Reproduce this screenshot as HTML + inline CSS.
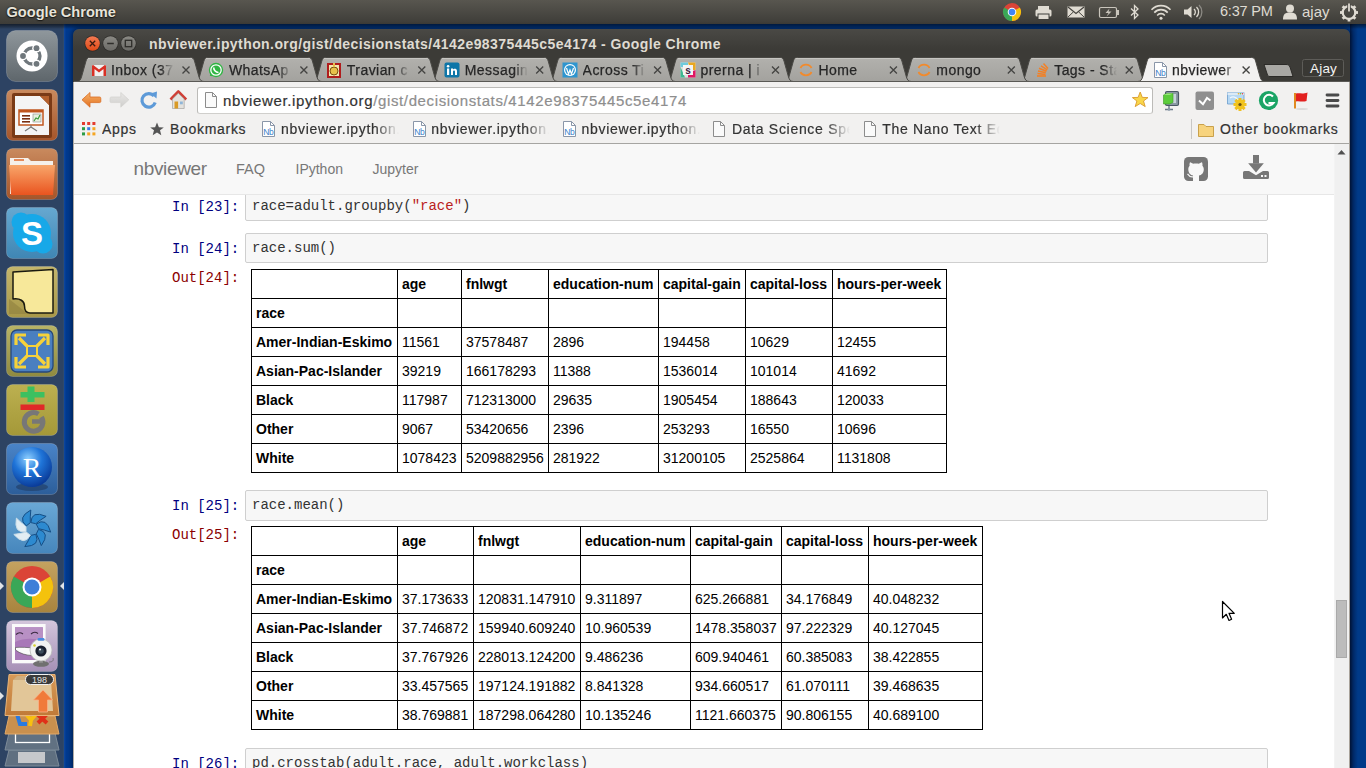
<!DOCTYPE html><html><head><meta charset="utf-8"><style>
*{margin:0;padding:0;box-sizing:border-box}
html,body{width:1366px;height:768px;overflow:hidden;background:#003a8a;font-family:"Liberation Sans",sans-serif;position:relative}
div,span,svg{position:absolute}
.t{white-space:nowrap;line-height:1}
#panel{left:0;top:0;width:1366px;height:24px;background:linear-gradient(#58564f,#3d3c38)}
#pshadow{left:0;top:24px;width:1366px;height:5px;background:linear-gradient(rgba(0,0,0,0.55),rgba(0,0,0,0.25) 60%,rgba(0,0,0,0))}
#launcher{left:0;top:24px;width:64px;height:744px;background:#2d4363}
#lnedge{left:63px;top:24px;width:1px;height:744px;background:#2f4a6c}
#bluestrip{left:64px;top:24px;width:10px;height:744px;background:linear-gradient(90deg,#1048a0,#003a90 2px,#003a8c)}
#rightblue{left:1350px;top:24px;width:16px;height:744px;background:linear-gradient(90deg,#001a48,#002c6c 3px,#003a88 8px)}
#win{left:73px;top:29px;width:1277px;height:739px;background:linear-gradient(#4a4945,#3c3b37 20px);border-radius:6px 6px 0 0;box-shadow:0 0 5px 1px rgba(0,10,30,0.6)}
#toolbar{left:74px;top:82px;width:1276px;height:61px;background:#f2f1f0}
#tbline{left:74px;top:81px;width:1276px;height:1px;background:#5a5955}
#bmline{left:74px;top:143px;width:1276px;height:1px;background:#a6a5a2}
#omni{left:197px;top:87px;width:956px;height:27px;background:#fff;border:1px solid #bcbbb8;border-bottom-color:#d0cfcc;border-radius:3px}
#content{left:74px;top:144px;width:1276px;height:624px;background:#fff}
#navbar{left:74px;top:144px;width:1260px;height:51px;background:#f8f8f8;border-bottom:1px solid #e7e7e7}
#scroll{left:1334px;top:144px;width:15px;height:624px;background:#f0f0f0;border-left:1px solid #f3f3f3}
#wedgeL{left:73px;top:82px;width:1px;height:686px;background:#b0aba4}
#wedgeR{left:1349px;top:82px;width:1px;height:686px;background:#a8a29a}
.cell{left:245px;width:1023px;height:30px;background:#f7f7f7;border:1px solid #cfcfcf;border-radius:2px}
.code{font-family:"Liberation Mono",monospace;font-size:14px;color:#333;left:252px}
.prompt{font-family:"Liberation Mono",monospace;font-size:14px;color:#000080;left:172px}
.out{color:#8b0000}
.str{color:#ba2121}
table.df{position:absolute;left:251px;border-collapse:collapse;font-size:14px;color:#000;font-family:"Liberation Sans",sans-serif}
table.df td,table.df th{border:1px solid #000;padding:4px;height:29px;line-height:20px;text-align:left;white-space:nowrap;font-weight:normal}
table.df th{font-weight:bold}
.tabtxt{-webkit-text-stroke:0.25px #262626;font-size:14px;color:#262626;letter-spacing:0.45px;overflow:hidden;height:18px;line-height:18px}
.bm{-webkit-text-stroke:0.2px #333;font-size:14px;color:#333;letter-spacing:0.7px;line-height:18px;height:18px;overflow:hidden;margin-top:-0.6px}
.ticon{width:16px;height:16px}
.launch{left:6px;width:52px;height:52px;border-radius:7px}
</style></head><body>
<div id="panel"></div>
<span class="t" style="left:6.5px;top:5px;font-size:14.6px;font-weight:bold;color:#e8e4da;text-shadow:0 0 2px #1a1a18,0 1px 1px #1a1a18">Google Chrome</span>
<span class="t" style="left:1220px;top:4px;font-size:14.5px;color:#dfdbd2;letter-spacing:-0.2px">6:37 PM</span>
<span class="t" style="left:1302px;top:4px;font-size:15px;color:#dfdbd2">ajay</span>
<svg style="left:990px;top:0px" width="376" height="24" viewBox="990 0 376 24"><circle cx="1012" cy="12" r="9" fill="#db4437"/><path d="M1012 12 L1019.8 7.5 A9 9 0 0 1 1012 21 Z" fill="#f4c20d"/><path d="M1012 12 L1012 21 A9 9 0 0 1 1004.2 7.5 Z" fill="#3aa757"/><circle cx="1012" cy="12" r="4.3" fill="#fff"/><circle cx="1012" cy="12" r="3.3" fill="#4285f4"/><rect x="1038" y="6" width="11" height="4" fill="#dfdbd2"/><rect x="1035.5" y="9.5" width="16" height="7" rx="1.5" fill="#dfdbd2"/><rect x="1038" y="14" width="11" height="5.5" fill="#dfdbd2" stroke="#3f3e3a" stroke-width="1"/><rect x="1067.5" y="6.5" width="17" height="11" fill="#dfdbd2"/><path d="M1068 7 L1076 13.5 L1084 7" fill="none" stroke="#45443f" stroke-width="1.2"/><path d="M1068 17 L1073.5 11.8 M1084 17 L1078.5 11.8" stroke="#45443f" stroke-width="1"/><rect x="1099.5" y="7.5" width="17" height="10" rx="1.5" fill="none" stroke="#c9c5bc" stroke-width="1.2"/><rect x="1117" y="10" width="2" height="5" fill="#c9c5bc"/><path d="M1109.5 8.5 L1105.5 13 L1108.5 13 L1106.5 16.5 L1111.5 11.5 L1108.5 11.5 Z" fill="#c9c5bc"/><path d="M1131 8.5 L1138 15 L1134.5 18.5 V5.5 L1138 9 L1131 15.5" fill="none" stroke="#dfdbd2" stroke-width="1.3"/><path d="M1151.5 9.8 A13 13 0 0 1 1170.5 9.8" fill="none" stroke="#dfdbd2" stroke-width="1.6"/><path d="M1154.3 12.6 A9 9 0 0 1 1167.7 12.6" fill="none" stroke="#dfdbd2" stroke-width="1.6"/><path d="M1157.2 15.4 A5 5 0 0 1 1164.8 15.4" fill="none" stroke="#dfdbd2" stroke-width="1.6"/><circle cx="1161" cy="18.3" r="1.5" fill="#dfdbd2"/><path d="M1184 9.5 H1187.5 L1191.5 6 V18 L1187.5 14.5 H1184 Z" fill="#dfdbd2"/><path d="M1194 9 A4 4 0 0 1 1194 15 M1196.5 7 A7 7 0 0 1 1196.5 17" fill="none" stroke="#dfdbd2" stroke-width="1.3"/><path d="M1199 5 A10 10 0 0 1 1199 19" fill="none" stroke="#8c8a84" stroke-width="1.3"/><circle cx="1290" cy="8.5" r="4" fill="#dfdbd2"/><path d="M1283 19.5 C1283 13.5 1285.5 12.5 1290 12.5 C1294.5 12.5 1297 13.5 1297 19.5 Z" fill="#dfdbd2"/><circle cx="1349" cy="12.5" r="6.3" fill="none" stroke="#dfdbd2" stroke-width="2.2"/><rect x="1347.6" y="3.5" width="2.8" height="3.5" fill="#dfdbd2" transform="rotate(45 1349 12.5)"/><rect x="1347.6" y="3.5" width="2.8" height="3.5" fill="#dfdbd2" transform="rotate(90 1349 12.5)"/><rect x="1347.6" y="3.5" width="2.8" height="3.5" fill="#dfdbd2" transform="rotate(135 1349 12.5)"/><rect x="1347.6" y="3.5" width="2.8" height="3.5" fill="#dfdbd2" transform="rotate(180 1349 12.5)"/><rect x="1347.6" y="3.5" width="2.8" height="3.5" fill="#dfdbd2" transform="rotate(225 1349 12.5)"/><rect x="1347.6" y="3.5" width="2.8" height="3.5" fill="#dfdbd2" transform="rotate(270 1349 12.5)"/><rect x="1347.6" y="3.5" width="2.8" height="3.5" fill="#dfdbd2" transform="rotate(315 1349 12.5)"/><path d="M1349 4 V12" stroke="#45443f" stroke-width="3.4"/><path d="M1349 3.5 V11.5" stroke="#dfdbd2" stroke-width="1.8"/></svg>
<div id="launcher"></div><div id="lnedge"></div><div id="bluestrip"></div><div id="rightblue"></div>
<svg style="left:0;top:24px" width="64" height="744" viewBox="0 24 64 744"><g transform="translate(6 30)"><defs><linearGradient id="tl30" x1="0" y1="0" x2="0" y2="1"><stop offset="0" stop-color="#8f979c"/><stop offset="1" stop-color="#5e666b"/></linearGradient></defs><rect x="0.5" y="0.5" width="51" height="51" rx="9" fill="url(#tl30)" stroke="rgba(255,255,255,0.18)" stroke-width="1"/><circle cx="26" cy="26" r="15.5" fill="#fff"/><circle cx="26" cy="26" r="8" fill="none" stroke="#6f777c" stroke-width="3.3"/><circle cx="17" cy="26" r="4.3" fill="#fff"/><circle cx="30.5" cy="18.2" r="4.3" fill="#fff"/><circle cx="30.5" cy="33.8" r="4.3" fill="#fff"/><circle cx="17" cy="26" r="2.9" fill="#6f777c"/><circle cx="30.5" cy="18.2" r="2.9" fill="#6f777c"/><circle cx="30.5" cy="33.8" r="2.9" fill="#6f777c"/></g><g transform="translate(6 89)"><defs><linearGradient id="tl89" x1="0" y1="0" x2="0" y2="1"><stop offset="0" stop-color="#c98a5e"/><stop offset="1" stop-color="#a5552a"/></linearGradient></defs><rect x="0.5" y="0.5" width="51" height="51" rx="6" fill="url(#tl89)" stroke="rgba(255,255,255,0.18)" stroke-width="1"/><rect x="6" y="4" width="40" height="45" rx="2" fill="#7a3a16"/><path d="M9 7 H34 L43 16 V46 H9 Z" fill="#f4f4f4"/><path d="M34 7 L43 7 L43 16 Z" fill="#b5602c"/><rect x="13" y="21" width="24" height="15" fill="#fff" stroke="#c0561e" stroke-width="1.5"/><rect x="13" y="21" width="24" height="2.5" fill="#c0561e"/><rect x="16" y="26" width="8" height="1.6" fill="#7a2f10"/><rect x="16" y="29" width="8" height="1.6" fill="#7a2f10"/><rect x="16" y="32" width="8" height="1.6" fill="#7a2f10"/><rect x="27" y="25" width="8" height="8" fill="#e6f0e0" stroke="#888" stroke-width="0.6"/><path d="M28 32 L30 29 L32 30 L34 26" stroke="#3a9a3a" stroke-width="1.2" fill="none"/><path d="M25 36 V38 L19 42 M25 38 L31 42" stroke="#777" stroke-width="1.2" fill="none"/></g><g transform="translate(6 148)"><defs><linearGradient id="tl148" x1="0" y1="0" x2="0" y2="1"><stop offset="0" stop-color="#c98a5e"/><stop offset="1" stop-color="#a5552a"/></linearGradient></defs><rect x="0.5" y="0.5" width="51" height="51" rx="6" fill="url(#tl148)" stroke="rgba(255,255,255,0.18)" stroke-width="1"/><path d="M4 10 H22 L25 13 H47 V46 H4 Z" fill="#f5f0ea"/><rect x="8" y="11" width="10" height="2" fill="#e58a5a"/><defs><linearGradient id="fo" x1="0" y1="0" x2="0" y2="1"><stop offset="0" stop-color="#f8a66a"/><stop offset="1" stop-color="#e9541f"/></linearGradient></defs><path d="M3 17 H49 L47 47 H5 Z" fill="url(#fo)"/></g><g transform="translate(6 207)"><defs><linearGradient id="tl207" x1="0" y1="0" x2="0" y2="1"><stop offset="0" stop-color="#66a8d0"/><stop offset="1" stop-color="#3f86b4"/></linearGradient></defs><rect x="0.5" y="0.5" width="51" height="51" rx="6" fill="url(#tl207)" stroke="rgba(255,255,255,0.18)" stroke-width="1"/><circle cx="26" cy="26" r="19" fill="#17a8e8"/><circle cx="15" cy="15" r="9.5" fill="#17a8e8"/><circle cx="37" cy="37" r="9.5" fill="#17a8e8"/><text x="26" y="38" font-family="Liberation Sans" font-weight="bold" font-size="33" text-anchor="middle" fill="#fff">S</text></g><g transform="translate(6 266)"><defs><linearGradient id="tl266" x1="0" y1="0" x2="0" y2="1"><stop offset="0" stop-color="#c4b66c"/><stop offset="1" stop-color="#a89848"/></linearGradient></defs><rect x="0.5" y="0.5" width="51" height="51" rx="6" fill="url(#tl266)" stroke="rgba(255,255,255,0.18)" stroke-width="1"/><path d="M3 33 L3 48 L22 48 Z" fill="#8f8040" opacity="0.6"/><path d="M7 6 L47 3.5 L47 47 L24 47 C20 47 18.5 44 18.5 40 C18.5 35 14 32 7 33 Z" fill="#f7e89a" stroke="#1a1a10" stroke-width="1.5" stroke-linejoin="round"/></g><g transform="translate(6 325)"><defs><linearGradient id="tl325" x1="0" y1="0" x2="0" y2="1"><stop offset="0" stop-color="#b8b466"/><stop offset="1" stop-color="#8f8a40"/></linearGradient></defs><rect x="0.5" y="0.5" width="51" height="51" rx="6" fill="url(#tl325)" stroke="rgba(255,255,255,0.18)" stroke-width="1"/><rect x="5" y="5" width="42" height="42" rx="6" fill="#4a7fc0" stroke="#26477a" stroke-width="1.3"/><g fill="none" stroke="#f6d23a" stroke-width="3.2" stroke-linejoin="round"><path d="M10 20 V10 H20 M13 13 L22 22"/><path d="M42 20 V10 H32 M39 13 L30 22"/><path d="M10 32 V42 H20 M13 39 L22 30"/><path d="M42 32 V42 H32 M39 39 L30 30"/></g><rect x="21" y="21" width="10" height="10" fill="none" stroke="#f6d23a" stroke-width="2"/></g><g transform="translate(6 384)"><defs><linearGradient id="tl384" x1="0" y1="0" x2="0" y2="1"><stop offset="0" stop-color="#bcb050"/><stop offset="1" stop-color="#a49838"/></linearGradient></defs><rect x="0.5" y="0.5" width="51" height="51" rx="6" fill="url(#tl384)" stroke="rgba(255,255,255,0.18)" stroke-width="1"/><rect x="21.5" y="2.5" width="7" height="15.5" fill="#3cc060"/><rect x="14.5" y="8" width="24" height="5.5" fill="#3cc060"/><rect x="14.5" y="20.5" width="24" height="5.5" fill="#e02828"/><path d="M35.5 33 A9.3 9.3 0 1 1 32.5 30" fill="none" stroke="#777" stroke-width="5"/><path d="M26 37.5 H35" stroke="#777" stroke-width="4.5"/></g><g transform="translate(6 443)"><defs><linearGradient id="tl443" x1="0" y1="0" x2="0" y2="1"><stop offset="0" stop-color="#4a84c8"/><stop offset="1" stop-color="#2c5e9a"/></linearGradient></defs><rect x="0.5" y="0.5" width="51" height="51" rx="6" fill="url(#tl443)" stroke="rgba(255,255,255,0.18)" stroke-width="1"/><ellipse cx="26" cy="44" rx="16" ry="4" fill="#203a60" opacity="0.6"/><defs><radialGradient id="rg" cx="0.4" cy="0.3" r="0.7"><stop offset="0" stop-color="#8fd0ff"/><stop offset="0.5" stop-color="#1f74d8"/><stop offset="1" stop-color="#0a3c9a"/></radialGradient></defs><circle cx="26" cy="24" r="20" fill="url(#rg)"/><text x="26" y="34" font-family="Liberation Serif" font-size="28" text-anchor="middle" fill="#fff">R</text></g><g transform="translate(6 502)"><defs><linearGradient id="tl502" x1="0" y1="0" x2="0" y2="1"><stop offset="0" stop-color="#6aa8d6"/><stop offset="1" stop-color="#4686bc"/></linearGradient></defs><rect x="0.5" y="0.5" width="51" height="51" rx="6" fill="url(#tl502)" stroke="rgba(255,255,255,0.18)" stroke-width="1"/><path d="M24.9 20.6 Q25.3 8.0 40.1 14.3 Q34.0 18.1 29.8 21.7 Z" fill="#2d8ad0" stroke="#164f86" stroke-width="1"/><path d="M30.3 22.1 Q40.4 14.6 44.7 30.1 Q38.0 27.7 32.5 26.7 Z" fill="#2d8ad0" stroke="#164f86" stroke-width="1"/><path d="M32.5 27.3 Q44.7 30.6 35.3 43.6 Q32.9 36.8 30.3 31.9 Z" fill="#2d8ad0" stroke="#164f86" stroke-width="1"/><path d="M29.8 32.3 Q34.9 43.8 18.8 44.6 Q22.7 38.5 24.8 33.4 Z" fill="#2d8ad0" stroke="#164f86" stroke-width="1"/><path d="M24.3 33.3 Q18.4 44.4 7.8 32.4 Q14.9 31.6 20.3 30.1 Z" fill="#e2edf3" stroke="#c8dce8" stroke-width="1"/><path d="M20.0 29.5 Q7.6 31.9 10.4 16.1 Q15.5 21.2 20.0 24.5 Z" fill="#e2edf3" stroke="#c8dce8" stroke-width="1"/><path d="M20.3 23.9 Q10.7 15.7 24.8 8.0 Q24.0 15.2 24.3 20.7 Z" fill="#2d8ad0" stroke="#164f86" stroke-width="1"/></g><g transform="translate(6 561)"><defs><linearGradient id="tl561" x1="0" y1="0" x2="0" y2="1"><stop offset="0" stop-color="#c4a260"/><stop offset="1" stop-color="#a8843e"/></linearGradient></defs><rect x="0.5" y="0.5" width="51" height="51" rx="6" fill="url(#tl561)" stroke="rgba(255,255,255,0.18)" stroke-width="1"/><circle cx="26" cy="26" r="21" fill="#db4437"/><path d="M26 26 L44.19 15.5 A21 21 0 0 1 26 47 Z" fill="#f4c20d"/><path d="M26 26 L26 47 A21 21 0 0 1 7.81 15.5 Z" fill="#3aa757"/><circle cx="26" cy="26" r="9.5" fill="#fff"/><circle cx="26" cy="26" r="7.5" fill="#3f7fd8"/></g><path d="M0 582 L4 586 L0 590 Z" fill="#dfe3e8"/><path d="M64 582 L60 586 L64 590 Z" fill="#dfe3e8"/><g transform="translate(6 620)"><defs><linearGradient id="tl620" x1="0" y1="0" x2="0" y2="1"><stop offset="0" stop-color="#d4c6dc"/><stop offset="1" stop-color="#a690b6"/></linearGradient></defs><rect x="0.5" y="0.5" width="51" height="51" rx="6" fill="url(#tl620)" stroke="rgba(255,255,255,0.18)" stroke-width="1"/><rect x="6" y="4" width="33.6" height="39.3" fill="#fafafa"/><rect x="9" y="7.3" width="27.8" height="32.7" fill="#a878b8"/><path d="M9 22 C18 18 28 18 36.8 21 V7.3 H9 Z" fill="#b890c4"/><path d="M10 14.5 C12 12.5 15 12.5 17 14 M25 14 C27 12 30 12 32 13.5" stroke="#3a2a40" stroke-width="1.1" fill="none"/><path d="M9.5 27.5 C15 27 22 27.5 28 28 L27 35.5 C20 35.5 14 33.5 9.5 30 Z" fill="#fbfbfb" stroke="#444" stroke-width="0.6"/><ellipse cx="35" cy="43.8" rx="8" ry="3" fill="#707070"/><rect x="33" y="38" width="4" height="5" fill="#888"/><circle cx="35" cy="30" r="11" fill="#f2f2f2" stroke="#b8b8b8" stroke-width="0.8"/><circle cx="35" cy="31" r="5.6" fill="#1a2030"/><circle cx="35" cy="31" r="2.8" fill="#3a4a5a"/><circle cx="34" cy="29.5" r="1" fill="#fff"/><rect x="31.5" y="18" width="7" height="2.8" rx="1.4" fill="#4a8ae0"/><circle cx="28.5" cy="25.5" r="1.3" fill="#d8d030"/><path d="M43 42 C46 42 48 41 47 38" stroke="#666" stroke-width="0.7" fill="none"/></g><defs><linearGradient id="up" x1="0" y1="0" x2="0" y2="1"><stop offset="0" stop-color="#d89a58"/><stop offset="1" stop-color="#c07a38"/></linearGradient></defs><path d="M9 750 H55 L59 766 H5 Z" fill="#5f6f80" stroke="#7d8b98" stroke-width="1"/><rect x="18" y="752" width="27" height="11" fill="#d8d8d8" opacity="0.85"/><path d="M9 733 H55 L59 750 H5 Z" fill="#617182" stroke="#7d8b98" stroke-width="1"/><rect x="15.5" y="732.5" width="34" height="10" fill="none" stroke="#fff" stroke-width="1.3"/><path d="M9 716 H55 L59 734 H5 Z" fill="#c9904e" stroke="#e0a868" stroke-width="1"/><path d="M17 714 L20 724 H27" stroke="#2a7ae0" stroke-width="4" fill="none"/><path d="M26 714 L31 720 L36 714 M31 720 L30 726" stroke="#f8c010" stroke-width="4" fill="none"/><path d="M37 714 L47 723 M47 714 L38 723" stroke="#e03018" stroke-width="4" fill="none"/><path d="M9 674.5 H55 L59 715.5 H5 Z" fill="url(#up)" stroke="#e8b478" stroke-width="1"/><path d="M13 680 H51 L53 711 H11 Z" fill="#e2c698"/><path d="M13 680 L17 676 H47 L51 680 Z" fill="#d0ae7e"/><rect x="30" y="680" width="3" height="4" fill="#f0e0c0"/><path d="M43 690 L52.5 700 H47.5 V712 H38.5 V700 H33.5 Z" fill="#f07a3a" stroke="#f8b088" stroke-width="0.8"/><rect x="25.5" y="674.5" width="28" height="10" rx="5" fill="#3a3a3a" stroke="#f0f0f0" stroke-width="1"/><text x="39.5" y="683" font-family="Liberation Sans" font-size="9" text-anchor="middle" fill="#e6e6e6">198</text><path d="M0 692 L4 696 L0 700 Z" fill="#dfe3e8"/></svg>
<div id="pshadow"></div>
<div id="win"></div>
<svg style="left:78px;top:34px" width="64" height="20" viewBox="78 34 64 20"><defs><linearGradient id="cg" x1="0" y1="0" x2="0" y2="1"><stop offset="0" stop-color="#f47a52"/><stop offset="1" stop-color="#df4a17"/></linearGradient><linearGradient id="gg" x1="0" y1="0" x2="0" y2="1"><stop offset="0" stop-color="#8a8984"/><stop offset="1" stop-color="#6c6b67"/></linearGradient></defs><circle cx="92.5" cy="43.5" r="8" fill="#2a2a28"/><circle cx="92.5" cy="43.5" r="7.3" fill="url(#cg)"/><path d="M89.8 40.8 L95.2 46.2 M95.2 40.8 L89.8 46.2" stroke="#3a1a10" stroke-width="1.3"/><circle cx="110.5" cy="43.5" r="8" fill="#2e2d2a"/><circle cx="110.5" cy="43.5" r="7.3" fill="url(#gg)"/><path d="M107.2 43.5 H113.8" stroke="#2f2e2b" stroke-width="1.5"/><circle cx="128.5" cy="43.5" r="8" fill="#2e2d2a"/><circle cx="128.5" cy="43.5" r="7.3" fill="url(#gg)"/><rect x="125.3" y="40.3" width="6.4" height="6.4" fill="none" stroke="#2f2e2b" stroke-width="1.3"/></svg>
<svg style="left:73px;top:56px" width="1277" height="26" viewBox="73 56 1277 26"><defs><linearGradient id="tg" x1="0" y1="0" x2="0" y2="1"><stop offset="0" stop-color="#b2b1ad"/><stop offset="1" stop-color="#a3a29e"/></linearGradient></defs><path d="M1019.7 81.5 C1022.7 81.5 1023.7 80 1024.7 77 L1029.2 61 C1029.9 58.5 1031.2 57.5 1033.2 57.5 L1133.7 57.5 C1135.7 57.5 1137.0 58.5 1137.7 61 L1142.2 77 C1143.2 80 1144.2 81.5 1147.2 81.5 Z" fill="url(#tg)" stroke="#4a4945" stroke-width="1"/><path d="M1031.2 58.5 L1135.2 58.5" stroke="#c6c5c1" stroke-width="1"/><path d="M901.8 81.5 C904.8 81.5 905.8 80 906.8 77 L911.3 61 C912.0 58.5 913.3 57.5 915.3 57.5 L1015.8 57.5 C1017.8 57.5 1019.1 58.5 1019.8 61 L1024.3 77 C1025.3 80 1026.3 81.5 1029.3 81.5 Z" fill="url(#tg)" stroke="#4a4945" stroke-width="1"/><path d="M913.3 58.5 L1017.3 58.5" stroke="#c6c5c1" stroke-width="1"/><path d="M783.9 81.5 C786.9 81.5 787.9 80 788.9 77 L793.4 61 C794.1 58.5 795.4 57.5 797.4 57.5 L897.9 57.5 C899.9 57.5 901.2 58.5 901.9 61 L906.4 77 C907.4 80 908.4 81.5 911.4 81.5 Z" fill="url(#tg)" stroke="#4a4945" stroke-width="1"/><path d="M795.4 58.5 L899.4 58.5" stroke="#c6c5c1" stroke-width="1"/><path d="M666.0 81.5 C669.0 81.5 670.0 80 671.0 77 L675.5 61 C676.2 58.5 677.5 57.5 679.5 57.5 L780.0 57.5 C782.0 57.5 783.3 58.5 784.0 61 L788.5 77 C789.5 80 790.5 81.5 793.5 81.5 Z" fill="url(#tg)" stroke="#4a4945" stroke-width="1"/><path d="M677.5 58.5 L781.5 58.5" stroke="#c6c5c1" stroke-width="1"/><path d="M548.1 81.5 C551.1 81.5 552.1 80 553.1 77 L557.6 61 C558.3 58.5 559.6 57.5 561.6 57.5 L662.1 57.5 C664.1 57.5 665.4 58.5 666.1 61 L670.6 77 C671.6 80 672.6 81.5 675.6 81.5 Z" fill="url(#tg)" stroke="#4a4945" stroke-width="1"/><path d="M559.6 58.5 L663.6 58.5" stroke="#c6c5c1" stroke-width="1"/><path d="M430.2 81.5 C433.2 81.5 434.2 80 435.2 77 L439.7 61 C440.4 58.5 441.7 57.5 443.7 57.5 L544.2 57.5 C546.2 57.5 547.5 58.5 548.2 61 L552.7 77 C553.7 80 554.7 81.5 557.7 81.5 Z" fill="url(#tg)" stroke="#4a4945" stroke-width="1"/><path d="M441.7 58.5 L545.7 58.5" stroke="#c6c5c1" stroke-width="1"/><path d="M312.3 81.5 C315.3 81.5 316.3 80 317.3 77 L321.8 61 C322.5 58.5 323.8 57.5 325.8 57.5 L426.3 57.5 C428.3 57.5 429.6 58.5 430.3 61 L434.8 77 C435.8 80 436.8 81.5 439.8 81.5 Z" fill="url(#tg)" stroke="#4a4945" stroke-width="1"/><path d="M323.8 58.5 L427.8 58.5" stroke="#c6c5c1" stroke-width="1"/><path d="M194.4 81.5 C197.4 81.5 198.4 80 199.4 77 L203.9 61 C204.6 58.5 205.9 57.5 207.9 57.5 L308.4 57.5 C310.4 57.5 311.7 58.5 312.4 61 L316.9 77 C317.9 80 318.9 81.5 321.9 81.5 Z" fill="url(#tg)" stroke="#4a4945" stroke-width="1"/><path d="M205.9 58.5 L309.9 58.5" stroke="#c6c5c1" stroke-width="1"/><path d="M76.5 81.5 C79.5 81.5 80.5 80 81.5 77 L86.0 61 C86.7 58.5 88.0 57.5 90.0 57.5 L190.5 57.5 C192.5 57.5 193.8 58.5 194.5 61 L199.0 77 C200.0 80 201.0 81.5 204.0 81.5 Z" fill="url(#tg)" stroke="#4a4945" stroke-width="1"/><path d="M88.0 58.5 L192.0 58.5" stroke="#c6c5c1" stroke-width="1"/><path d="M1137.6 81.5 C1140.6 81.5 1141.6 80 1142.6 77 L1147.1 61 C1147.8 58.5 1149.1 57.5 1151.1 57.5 L1251.6 57.5 C1253.6 57.5 1254.9 58.5 1255.6 61 L1260.1 77 C1261.1 80 1262.1 81.5 1265.1 81.5 Z" fill="#f2f1f0" stroke="#4a4945" stroke-width="1"/><path d="M182.5 66.5 L189.5 73.5 M189.5 66.5 L182.5 73.5" stroke="#454543" stroke-width="1.35"/><path d="M300.4 66.5 L307.4 73.5 M307.4 66.5 L300.4 73.5" stroke="#454543" stroke-width="1.35"/><path d="M418.3 66.5 L425.3 73.5 M425.3 66.5 L418.3 73.5" stroke="#454543" stroke-width="1.35"/><path d="M536.2 66.5 L543.2 73.5 M543.2 66.5 L536.2 73.5" stroke="#454543" stroke-width="1.35"/><path d="M654.1 66.5 L661.1 73.5 M661.1 66.5 L654.1 73.5" stroke="#454543" stroke-width="1.35"/><path d="M772.0 66.5 L779.0 73.5 M779.0 66.5 L772.0 73.5" stroke="#454543" stroke-width="1.35"/><path d="M889.9 66.5 L896.9 73.5 M896.9 66.5 L889.9 73.5" stroke="#454543" stroke-width="1.35"/><path d="M1007.8 66.5 L1014.8 73.5 M1014.8 66.5 L1007.8 73.5" stroke="#454543" stroke-width="1.35"/><path d="M1125.7 66.5 L1132.7 73.5 M1132.7 66.5 L1125.7 73.5" stroke="#454543" stroke-width="1.35"/><path d="M1242.6 66.5 L1249.6 73.5 M1249.6 66.5 L1242.6 73.5" stroke="#454543" stroke-width="1.35"/><path d="M1264 64.5 L1286 64.5 C1288 64.5 1289 65 1290 67 L1293 76.5 L1270 76.5 C1268.5 76.5 1268 76 1267.5 75 Z" fill="#a9a8a4" stroke="#2c2b28" stroke-width="1"/><rect x="1302.5" y="59.5" width="41" height="17" rx="2" fill="#393834" stroke="#5d5c58" stroke-width="1"/></svg>
<span class="t" style="left:1310px;top:62px;font-size:13.5px;color:#f4f4f2;letter-spacing:0.2px">Ajay</span>
<span class="t tabtxt" style="left:111.0px;top:61px;width:63px;-webkit-mask-image:linear-gradient(90deg,#000 78%,transparent 100%)">Inbox (37</span>
<svg style="left:91px;top:62px" width="16" height="16" viewBox="0 0 16 16"><rect x="1" y="3" width="14" height="11" fill="#f1f1f1"/><path d="M1 3.5 V14 H3.5 V7 L8 10.5 L12.5 7 V14 H15 V3.5 L13.8 3 L8 7.5 L2.2 3 Z" fill="#d93025"/></svg>
<span class="t tabtxt" style="left:228.9px;top:61px;width:63px;-webkit-mask-image:linear-gradient(90deg,#000 78%,transparent 100%)">WhatsAp</span>
<svg style="left:208px;top:62px" width="16" height="16" viewBox="0 0 16 16"><circle cx="8" cy="8" r="7.2" fill="#2fb542"/><path d="M3 14 L4 10.5" stroke="#2fb542" stroke-width="2.5"/><circle cx="8" cy="8" r="5.2" fill="none" stroke="#fff" stroke-width="1.3"/><path d="M5.8 5.5 C5.5 7.5 7.5 10.5 10.5 10.5" stroke="#fff" stroke-width="1.6" fill="none"/></svg>
<span class="t tabtxt" style="left:346.8px;top:61px;width:63px;-webkit-mask-image:linear-gradient(90deg,#000 78%,transparent 100%)">Travian c</span>
<svg style="left:326px;top:62px" width="16" height="16" viewBox="0 0 16 16"><rect x="1" y="1" width="14" height="15" fill="#b01c1c"/><rect x="3" y="3" width="10" height="11" fill="#f3e6b0"/><circle cx="8" cy="9" r="4" fill="#e8c04a" stroke="#7a5010" stroke-width="1"/><rect x="7" y="1" width="2" height="4" fill="#e8c04a"/></svg>
<span class="t tabtxt" style="left:464.7px;top:61px;width:63px;-webkit-mask-image:linear-gradient(90deg,#000 78%,transparent 100%)">Messagin</span>
<svg style="left:444px;top:62px" width="16" height="16" viewBox="0 0 16 16"><rect x="0.5" y="0.5" width="15" height="15" rx="2" fill="#0e76a8"/><rect x="3" y="6.5" width="2.2" height="6.5" fill="#fff"/><circle cx="4.1" cy="4.2" r="1.3" fill="#fff"/><path d="M7 13 V6.5 H9 V7.5 C9.5 6.5 13 6 13 9 V13 H11 V9.5 C11 8 9 8 9 9.5 V13 Z" fill="#fff"/></svg>
<span class="t tabtxt" style="left:582.6px;top:61px;width:63px;-webkit-mask-image:linear-gradient(90deg,#000 78%,transparent 100%)">Across Ti</span>
<svg style="left:562px;top:62px" width="16" height="16" viewBox="0 0 16 16"><rect x="0.5" y="0.5" width="15" height="15" fill="#2e95cf"/><circle cx="8" cy="8" r="6" fill="#fff"/><circle cx="8" cy="8" r="4.8" fill="#2e95cf"/><path d="M4.5 6 L6.5 12 L8 8 L9.5 12 L11.5 6" stroke="#fff" stroke-width="1.2" fill="none"/></svg>
<span class="t tabtxt" style="left:700.5px;top:61px;width:63px;-webkit-mask-image:linear-gradient(90deg,#000 78%,transparent 100%)">prerna | i</span>
<svg style="left:680px;top:62px" width="16" height="16" viewBox="0 0 16 16"><rect x="0.5" y="0.5" width="15" height="15" fill="#e0e0e0"/><path d="M0.5 0.5 H8 V5 H0.5Z" fill="#6ecadc"/><path d="M8 0.5 H15.5 V8 H11Z" fill="#e9a820"/><path d="M15.5 8 V15.5 H8 V11Z" fill="#e01563"/><path d="M0.5 5 L5 15.5 H0.5Z" fill="#3eb991"/><rect x="3" y="3" width="10" height="10" fill="#f4f4f4"/><text x="8" y="12" font-size="10" font-family="Liberation Sans" font-weight="bold" text-anchor="middle" fill="#3d1e3e">s</text></svg>
<span class="t tabtxt" style="left:818.4px;top:61px;width:63px;-webkit-mask-image:linear-gradient(90deg,#000 78%,transparent 100%)">Home</span>
<svg style="left:798px;top:62px" width="16" height="16" viewBox="0 0 16 16"><path d="M2.5 6 A6 5.5 0 0 1 13.5 6" stroke="#f28a2c" stroke-width="1.8" fill="none"/><path d="M2.5 10 A6 5.5 0 0 0 13.5 10" stroke="#f28a2c" stroke-width="1.8" fill="none"/></svg>
<span class="t tabtxt" style="left:936.3px;top:61px;width:63px;-webkit-mask-image:linear-gradient(90deg,#000 78%,transparent 100%)">mongo</span>
<svg style="left:916px;top:62px" width="16" height="16" viewBox="0 0 16 16"><path d="M2.5 6 A6 5.5 0 0 1 13.5 6" stroke="#f28a2c" stroke-width="1.8" fill="none"/><path d="M2.5 10 A6 5.5 0 0 0 13.5 10" stroke="#f28a2c" stroke-width="1.8" fill="none"/></svg>
<span class="t tabtxt" style="left:1054.2px;top:61px;width:63px;-webkit-mask-image:linear-gradient(90deg,#000 78%,transparent 100%)">Tags - Sta</span>
<svg style="left:1034px;top:62px" width="16" height="16" viewBox="0 0 16 16"><path d="M3 14 H12" stroke="#f48024" stroke-width="1.6"/><path d="M3.5 11.5 L11.5 12.5 M4 9 L11.8 10.8 M5 6.3 L12.5 9.3 M7 3.8 L13.3 7.8 M9.5 1.5 L14 6.5" stroke="#f48024" stroke-width="1.5"/></svg>
<span class="t tabtxt" style="left:1172.1px;top:61px;width:66px;-webkit-mask-image:linear-gradient(90deg,#000 78%,transparent 100%)">nbviewer</span>
<svg style="left:1152px;top:62px" width="16" height="16" viewBox="0 0 16 16"><path d="M2.5 0.5 H10.5 L14.5 4.5 V15.5 H2.5 Z" fill="#fff" stroke="#8a96a8" stroke-width="1"/><path d="M10.5 0.5 V4.5 H14.5" fill="none" stroke="#8a96a8"/><text x="8.3" y="13.5" font-size="8.5" font-family="Liberation Sans" text-anchor="middle" fill="#3a7ec8" letter-spacing="-0.5">Nb</text></svg>
<span class="t" style="left:149px;top:37px;font-size:14px;font-weight:bold;color:#dfdbd2;letter-spacing:0.42px">nbviewer.ipython.org/gist/decisionstats/4142e98375445c5e4174 - Google Chrome</span>
<div id="tbline"></div><div id="toolbar"></div><div id="bmline"></div>
<div id="omni"></div>
<svg style="left:203px;top:92px" width="16" height="16" viewBox="0 0 16 16"><path d="M2.5 0.5 H9.5 L13.5 4.5 V15.5 H2.5 Z" fill="#fafafa" stroke="#8c8c8c" stroke-width="1"/><path d="M9.5 0.5 V4.5 H13.5" fill="none" stroke="#8c8c8c"/></svg>
<span class="t" style="left:223px;top:93px;font-size:15px;color:#333;letter-spacing:0.63px;-webkit-text-stroke:0.2px #333">nbviewer.ipython.org<span style="position:static;color:#8e8e8e;-webkit-text-stroke:0.2px #8e8e8e">/gist/decisionstats/4142e98375445c5e4174</span></span>
<svg style="left:74px;top:82px" width="1276" height="61" viewBox="74 82 1276 61"><defs><linearGradient id="bk" x1="0" y1="0" x2="0" y2="1"><stop offset="0" stop-color="#f6b26b"/><stop offset="1" stop-color="#e2701f"/></linearGradient><linearGradient id="fw" x1="0" y1="0" x2="0" y2="1"><stop offset="0" stop-color="#e9e8e6"/><stop offset="1" stop-color="#cfcecc"/></linearGradient></defs><path d="M82 99.8 L90 92.5 L90 97 L99.5 97 C100.5 97 100.8 97.5 100.8 98.5 L100.8 101.2 C100.8 102 100.5 102.6 99.5 102.6 L90 102.6 L90 107.2 Z" fill="url(#bk)" stroke="#d96d23" stroke-width="0.8" stroke-linejoin="round"/><path d="M128.8 99.8 L120.8 92.5 L120.8 97 L111.3 97 C110.3 97 110 97.5 110 98.5 L110 101.2 C110 102 110.3 102.6 111.3 102.6 L120.8 102.6 L120.8 107.2 Z" fill="url(#fw)" stroke="#d4d3d1" stroke-width="0.8" stroke-linejoin="round"/><path d="M154 96 A6.8 6.8 0 1 0 155.2 102.5" fill="none" stroke="#5d9ad8" stroke-width="3.2"/><path d="M150.5 93.5 L157 91.5 L156.5 98.5 Z" fill="#5d9ad8"/><path d="M170.5 99.5 L178.3 91.5 L186.2 99.5" fill="none" stroke="#cf3f36" stroke-width="2.6" stroke-linejoin="round"/><path d="M172.5 99 L178.3 93.3 L184.2 99 L184.2 108.5 L172.5 108.5 Z" fill="#e4e2de" stroke="#9a9894" stroke-width="0.6"/><rect x="174.5" y="101.5" width="3.6" height="7" fill="#d99a25"/><rect x="180" y="101.5" width="2.8" height="2.8" fill="#8fb5d8"/><path d="M1140.2 92 L1142.3 97.4 L1148 97.6 L1143.5 101 L1145.2 106.6 L1140.2 103.5 L1135.2 106.6 L1136.9 101 L1132.4 97.6 L1138.1 97.4 Z" fill="#f9d649" stroke="#d99a2b" stroke-width="0.9" stroke-linejoin="round"/><rect x="1165.5" y="91.5" width="13" height="14" rx="1.5" fill="#8a98a4" stroke="#4a5864" stroke-width="1.2"/><rect x="1168" y="94" width="8" height="9" fill="#c8d2da"/><path d="M1163.5 95 L1167 93.5 L1173 93.5 L1173 102.5 L1169.5 104 L1163.5 104 Z" fill="#5ccc3c" stroke="#3a9a24" stroke-width="0.6"/><path d="M1163.5 95 L1167 93.5 L1173 93.5 L1169.5 95 Z" fill="#9ae67a"/><path d="M1169 106 V109 M1165 109.5 H1173" stroke="#6a7a88" stroke-width="1.4"/><circle cx="1169" cy="109.5" r="1.3" fill="#8a9aa8"/><rect x="1195.5" y="91.5" width="18.5" height="18.5" rx="2" fill="#8f8f8f"/><path d="M1199 100.5 L1203 104.2 L1207 98 L1210.5 100.5" fill="none" stroke="#fff" stroke-width="2" stroke-linejoin="miter"/><path d="M1227.5 92.5 H1244 V104 H1227.5 Z" fill="#b6d8f4" stroke="#6a9ccc" stroke-width="0.8"/><rect x="1227.5" y="92.5" width="16.5" height="2.5" fill="#dceaf6"/><circle cx="1238.5" cy="93.8" r="0.8" fill="#e8b020"/><circle cx="1240.5" cy="93.8" r="0.8" fill="#60c040"/><circle cx="1242.5" cy="93.8" r="0.8" fill="#e04040"/><path d="M1230 98 C1233 96 1236 97 1238 100" stroke="#fff" stroke-width="1.2" fill="none" opacity="0.8"/><rect x="1238.5" y="98" width="3" height="3.5" fill="#f0c020" transform="rotate(0 1240 104.5)"/><rect x="1238.5" y="98" width="3" height="3.5" fill="#f0c020" transform="rotate(45 1240 104.5)"/><rect x="1238.5" y="98" width="3" height="3.5" fill="#f0c020" transform="rotate(90 1240 104.5)"/><rect x="1238.5" y="98" width="3" height="3.5" fill="#f0c020" transform="rotate(135 1240 104.5)"/><rect x="1238.5" y="98" width="3" height="3.5" fill="#f0c020" transform="rotate(180 1240 104.5)"/><rect x="1238.5" y="98" width="3" height="3.5" fill="#f0c020" transform="rotate(225 1240 104.5)"/><rect x="1238.5" y="98" width="3" height="3.5" fill="#f0c020" transform="rotate(270 1240 104.5)"/><rect x="1238.5" y="98" width="3" height="3.5" fill="#f0c020" transform="rotate(315 1240 104.5)"/><circle cx="1240" cy="104.5" r="4.8" fill="#f2c41e"/><circle cx="1240" cy="104.5" r="1.6" fill="#6a5010"/><circle cx="1268.5" cy="100.5" r="9.6" fill="#1aa465"/><path d="M1273 96.5 A5.3 5.3 0 1 0 1273.6 103 L1268.5 103" fill="none" stroke="#fff" stroke-width="2"/><path d="M1295 93 V108.5" stroke="#e08a20" stroke-width="2"/><path d="M1296 93.5 C1299 92.5 1302 94.5 1307.5 92.5 L1306.5 101 C1302 102.5 1299 100.5 1296 101.5 Z" fill="#e2201f"/><ellipse cx="1302" cy="109" rx="6" ry="1" fill="#ccc" opacity="0.6"/><path d="M1327 95 H1338 M1327 100.5 H1338 M1327 106 H1338" stroke="#4a4a4a" stroke-width="2.8" stroke-linecap="round"/><g><rect x="82.0" y="122.0" width="3" height="3" fill="#e43c2f"/><rect x="87.2" y="122.0" width="3" height="3" fill="#e43c2f"/><rect x="92.4" y="122.0" width="3" height="3" fill="#e43c2f"/><rect x="82.0" y="127.2" width="3" height="3" fill="#2c9c46"/><rect x="87.2" y="127.2" width="3" height="3" fill="#3778e4"/><rect x="92.4" y="127.2" width="3" height="3" fill="#f5a623"/><rect x="82.0" y="132.4" width="3" height="3" fill="#2c9c46"/><rect x="87.2" y="132.4" width="3" height="3" fill="#f5a623"/><rect x="92.4" y="132.4" width="3" height="3" fill="#f5a623"/></g><path d="M157 122.5 L158.9 127.2 L163.8 127.4 L160 130.3 L161.3 135.2 L157 132.4 L152.7 135.2 L154 130.3 L150.2 127.4 L155.1 127.2 Z" fill="#555"/><path d="M1191.5 119 V139" stroke="#c8c7c5" stroke-width="1"/><path d="M1198.5 124.5 H1204 L1206 126.5 H1213.5 V136.5 H1198.5 Z" fill="#f7d37d" stroke="#c49a3f" stroke-width="0.9"/></svg>
<span class="t bm" style="left:102px;top:121px">Apps</span>
<span class="t bm" style="left:170px;top:121px">Bookmarks</span>
<svg style="left:260px;top:121px" width="16" height="16" viewBox="0 0 16 16"><path d="M2.5 0.5 H10.5 L14.5 4.5 V15.5 H2.5 Z" fill="#fff" stroke="#8a96a8" stroke-width="1"/><path d="M10.5 0.5 V4.5 H14.5" fill="none" stroke="#8a96a8"/><text x="8.3" y="13.5" font-size="8.5" font-family="Liberation Sans" text-anchor="middle" fill="#3a7ec8" letter-spacing="-0.5">Nb</text></svg>
<span class="t bm" style="left:281.0px;top:121px;width:118px;-webkit-mask-image:linear-gradient(90deg,#000 80%,transparent 100%)">nbviewer.ipython.org</span>
<svg style="left:411px;top:121px" width="16" height="16" viewBox="0 0 16 16"><path d="M2.5 0.5 H10.5 L14.5 4.5 V15.5 H2.5 Z" fill="#fff" stroke="#8a96a8" stroke-width="1"/><path d="M10.5 0.5 V4.5 H14.5" fill="none" stroke="#8a96a8"/><text x="8.3" y="13.5" font-size="8.5" font-family="Liberation Sans" text-anchor="middle" fill="#3a7ec8" letter-spacing="-0.5">Nb</text></svg>
<span class="t bm" style="left:431.3px;top:121px;width:118px;-webkit-mask-image:linear-gradient(90deg,#000 80%,transparent 100%)">nbviewer.ipython.org</span>
<svg style="left:561px;top:121px" width="16" height="16" viewBox="0 0 16 16"><path d="M2.5 0.5 H10.5 L14.5 4.5 V15.5 H2.5 Z" fill="#fff" stroke="#8a96a8" stroke-width="1"/><path d="M10.5 0.5 V4.5 H14.5" fill="none" stroke="#8a96a8"/><text x="8.3" y="13.5" font-size="8.5" font-family="Liberation Sans" text-anchor="middle" fill="#3a7ec8" letter-spacing="-0.5">Nb</text></svg>
<span class="t bm" style="left:581.6px;top:121px;width:118px;-webkit-mask-image:linear-gradient(90deg,#000 80%,transparent 100%)">nbviewer.ipython.org</span>
<svg style="left:711px;top:121px" width="16" height="16" viewBox="0 0 16 16"><path d="M2.5 0.5 H9.5 L13.5 4.5 V15.5 H2.5 Z" fill="#fafafa" stroke="#8c8c8c" stroke-width="1"/><path d="M9.5 0.5 V4.5 H13.5" fill="none" stroke="#8c8c8c"/></svg>
<span class="t bm" style="left:731.9px;top:121px;width:118px;-webkit-mask-image:linear-gradient(90deg,#000 80%,transparent 100%)">Data Science Specialization</span>
<svg style="left:862px;top:121px" width="16" height="16" viewBox="0 0 16 16"><path d="M2.5 0.5 H9.5 L13.5 4.5 V15.5 H2.5 Z" fill="#fafafa" stroke="#8c8c8c" stroke-width="1"/><path d="M9.5 0.5 V4.5 H13.5" fill="none" stroke="#8c8c8c"/></svg>
<span class="t bm" style="left:882.2px;top:121px;width:118px;-webkit-mask-image:linear-gradient(90deg,#000 80%,transparent 100%)">The Nano Text Editor</span>
<span class="t bm" style="left:1220px;top:121px;letter-spacing:0.75px">Other bookmarks</span>
<div id="content"></div><div id="scroll"></div><div id="wedgeL"></div><div id="wedgeR"></div>
<div class="cell" style="top:191px;height:30px"></div>
<span class="t code" style="top:199px">race=adult.groupby(<span style="position:static" class="str">"race"</span>)</span>
<span class="t prompt" style="top:200px">In [23]:</span>
<div class="cell" style="top:233px;height:30px"></div>
<span class="t code" style="top:241px">race.sum()</span>
<span class="t prompt" style="top:242px">In [24]:</span>
<span class="t prompt out" style="top:271px">Out[24]:</span>
<table class="df" style="top:269px;table-layout:fixed;width:696px"><colgroup><col style="width:146px"><col style="width:64px"><col style="width:87px"><col style="width:110px"><col style="width:87px"><col style="width:87px"><col style="width:114px"></colgroup><tr><th></th><th>age</th><th>fnlwgt</th><th>education-num</th><th>capital-gain</th><th>capital-loss</th><th>hours-per-week</th></tr><tr><th>race</th><td></td><td></td><td></td><td></td><td></td><td></td></tr><tr><th>Amer-Indian-Eskimo</th><td>11561</td><td>37578487</td><td>2896</td><td>194458</td><td>10629</td><td>12455</td></tr><tr><th>Asian-Pac-Islander</th><td>39219</td><td>166178293</td><td>11388</td><td>1536014</td><td>101014</td><td>41692</td></tr><tr><th>Black</th><td>117987</td><td>712313000</td><td>29635</td><td>1905454</td><td>188643</td><td>120033</td></tr><tr><th>Other</th><td>9067</td><td>53420656</td><td>2396</td><td>253293</td><td>16550</td><td>10696</td></tr><tr><th>White</th><td>1078423</td><td>5209882956</td><td>281922</td><td>31200105</td><td>2525864</td><td>1131808</td></tr></table>
<div class="cell" style="top:490px;height:31px"></div>
<span class="t code" style="top:498px">race.mean()</span>
<span class="t prompt" style="top:499px">In [25]:</span>
<span class="t prompt out" style="top:528px">Out[25]:</span>
<table class="df" style="top:526px;table-layout:fixed;width:732px"><colgroup><col style="width:146px"><col style="width:76px"><col style="width:107px"><col style="width:110px"><col style="width:91px"><col style="width:87px"><col style="width:114px"></colgroup><tr><th></th><th>age</th><th>fnlwgt</th><th>education-num</th><th>capital-gain</th><th>capital-loss</th><th>hours-per-week</th></tr><tr><th>race</th><td></td><td></td><td></td><td></td><td></td><td></td></tr><tr><th>Amer-Indian-Eskimo</th><td>37.173633</td><td>120831.147910</td><td>9.311897</td><td>625.266881</td><td>34.176849</td><td>40.048232</td></tr><tr><th>Asian-Pac-Islander</th><td>37.746872</td><td>159940.609240</td><td>10.960539</td><td>1478.358037</td><td>97.222329</td><td>40.127045</td></tr><tr><th>Black</th><td>37.767926</td><td>228013.124200</td><td>9.486236</td><td>609.940461</td><td>60.385083</td><td>38.422855</td></tr><tr><th>Other</th><td>33.457565</td><td>197124.191882</td><td>8.841328</td><td>934.660517</td><td>61.070111</td><td>39.468635</td></tr><tr><th>White</th><td>38.769881</td><td>187298.064280</td><td>10.135246</td><td>1121.660375</td><td>90.806155</td><td>40.689100</td></tr></table>
<div class="cell" style="top:748px;height:30px"></div>
<span class="t code" style="top:756px">pd.crosstab(adult.race, adult.workclass)</span>
<span class="t prompt" style="top:757px">In [26]:</span>
<div id="navbar"></div>
<span class="t" style="left:133.5px;top:158.5px;font-size:19px;color:#777;letter-spacing:-0.35px">nbviewer</span>
<span class="t" style="left:236px;top:161.5px;font-size:14.5px;color:#777">FAQ</span>
<span class="t" style="left:295.5px;top:162px;font-size:14px;color:#777">IPython</span>
<span class="t" style="left:372.5px;top:162px;font-size:14px;color:#777">Jupyter</span>
<svg style="left:1170px;top:150px" width="110" height="36" viewBox="1170 150 110 36"><rect x="1184" y="157" width="24" height="24" rx="4.5" fill="#777"/><path d="M1193 181 V175.5 C1190.5 175 1188.3 173 1188.3 169.2 C1188.3 167.8 1188.8 166.6 1189.6 165.7 C1189.4 164.8 1189.5 163.3 1190 162.2 C1191.2 162.4 1192.3 163.2 1193 163.8 C1194.8 163.3 1197.2 163.3 1199 163.8 C1199.7 163.2 1200.8 162.4 1202 162.2 C1202.5 163.3 1202.6 164.8 1202.4 165.7 C1203.2 166.6 1203.8 167.8 1203.8 169.2 C1203.8 173 1201.5 175 1199 175.5 V181 Z" fill="#f8f8f8"/><path d="M1193 176.8 C1190.5 177.2 1189 176 1187.5 173.8" stroke="#f8f8f8" stroke-width="1.2" fill="none"/><rect x="1253" y="155" width="6" height="8.5" fill="#777"/><path d="M1248.2 163.2 H1263.8 L1256 172.6 Z" fill="#777"/><path d="M1244.5 171 H1249 L1256 175.2 L1263 171 H1267.5 Q1269 171 1269 172.5 V177.5 Q1269 179 1267.5 179 H1244.5 Q1243 179 1243 177.5 V172.5 Q1243 171 1244.5 171 Z" fill="#777"/><rect x="1261" y="175" width="2" height="2" fill="#f8f8f8"/><rect x="1264.5" y="175" width="2" height="2" fill="#f8f8f8"/></svg>
<svg style="left:1334px;top:144px" width="16" height="624" viewBox="1334 144 16 624"><path d="M1337.5 154.5 L1341.5 150 L1345.5 154.5 Z" fill="#505050"/><rect x="1336.5" y="600.5" width="10" height="57" fill="#bcbcbc" stroke="#aaaaaa" stroke-width="1"/></svg>
<svg style="left:1220px;top:600px" width="20" height="24" viewBox="0 0 20 24"><path d="M2.5 1.5 L2.5 18 L6.3 14.3 L9 20.5 L11.6 19.3 L9 13.3 L14.3 13.3 Z" fill="#fff" stroke="#000" stroke-width="1.2" stroke-linejoin="round"/></svg>
</body></html>
